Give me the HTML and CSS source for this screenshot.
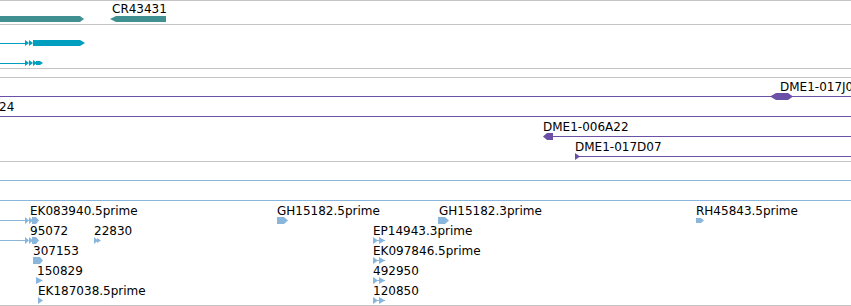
FILE: index.html
```html
<!DOCTYPE html>
<html lang="en">
<head>
    <meta charset="UTF-8">
    <title>Track view</title>
    <link rel="stylesheet" href="styles.css">
</head>
<body>
    <div class="view">
        <!-- gene models -->
        <div class="track t1">
            <svg width="851" height="23">
                <polygon class="teal" points="0,15 80,15 84,18 80,21 0,21"/>
                <polygon class="teal" points="110,18 116,15 166,15 166,21 116,21"/>
                <text x="112" y="12">CR43431</text>
            </svg>
        </div>

        <!-- transcripts -->
        <div class="track t2">
            <svg width="851" height="43">
                <rect class="cyan" x="0" y="18" width="25" height="1"/>
                <polygon class="cyan" points="25,15 29,18 25,21"/>
                <polygon class="cyan" points="29,15 33,18 29,21"/>
                <polygon class="cyan" points="33,15 80,15 85,18 80,21 33,21"/>

                <rect class="cyan" x="0" y="38" width="25" height="1"/>
                <polygon class="cyan" points="25,35 29,38 25,41"/>
                <polygon class="cyan" points="29,35 33,38 29,41"/>
                <polygon class="cyan" points="33,35 37,38 33,41"/>
                <polygon class="cyan" points="36,36 40,36 43,38 40,40 36,40"/>
            </svg>
        </div>

        <div class="track t3"></div>

        <!-- BAC clones -->
        <div class="track t4">
            <svg width="851" height="83">
                <rect class="purple" x="0" y="18" width="851" height="1"/>
                <polygon class="purple" points="770,18.5 776,15 788,15 793,18.5 788,22 776,22"/>
                <text x="780" y="13">DME1-017J06</text>

                <rect class="purple" x="0" y="38" width="851" height="1"/>
                <text x="-1" y="33">24</text>

                <rect class="purple" x="553" y="58" width="298" height="1"/>
                <polygon class="purple" points="543,58.5 547,55 553,55 553,62 547,62"/>
                <text x="543" y="53">DME1-006A22</text>

                <rect class="purple" x="575" y="78" width="276" height="1"/>
                <polygon class="purple" points="575,75 580,78.5 575,82"/>
                <text x="575" y="73">DME1-017D07</text>
            </svg>
        </div>

        <!-- ESTs -->
        <div class="track t5">
            <svg width="851" height="143">
                <rect class="blue" x="0" y="18" width="851" height="1"/>
                <rect class="blue" x="0" y="38" width="851" height="1"/>

                <rect class="blue" x="0" y="58" width="25" height="1"/>
                <polygon class="blue" points="25,55 29,58.5 25,62"/>
                <polygon class="blue" points="29,55 33,58.5 29,62"/>
                <polygon class="blue" points="32,55 36,55 39,58.5 36,62 32,62"/>
                <text x="30" y="53">EK083940.5prime</text>

                <polygon class="blue" points="277,55 284,55 288,58.5 284,62 277,62"/>
                <text x="277" y="53">GH15182.5prime</text>

                <polygon class="blue" points="438,55 445,55 449,58.5 445,62 438,62"/>
                <text x="439" y="53">GH15182.3prime</text>

                <polygon class="blue" points="696,56 701,56 704,58.5 701,61 696,61"/>
                <text x="696" y="53">RH45843.5prime</text>

                <rect class="blue" x="0" y="78" width="25" height="1"/>
                <polygon class="blue" points="25,75 29,78.5 25,82"/>
                <polygon class="blue" points="29,75 33,78.5 29,82"/>
                <polygon class="blue" points="32,75 36,75 39,78.5 36,82 32,82"/>
                <text x="30" y="73">95072</text>

                <polygon class="blue" points="94,75 98,78.5 94,82"/>
                <polygon class="blue" points="97,76 101,78.5 97,81"/>
                <text x="94" y="73">22830</text>

                <rect class="blue" x="373" y="78" width="12" height="1"/>
                <polygon class="blue" points="373,75 378,78.5 373,82"/>
                <polygon class="blue" points="379,75 385,78.5 379,82"/>
                <text x="373" y="73">EP14943.3prime</text>

                <polygon class="blue" points="33,95 40,95 43,98.5 40,102 33,102"/>
                <text x="33" y="93">307153</text>

                <rect class="blue" x="373" y="98" width="12" height="1"/>
                <polygon class="blue" points="373,95 378,98.5 373,102"/>
                <polygon class="blue" points="379,95 385,98.5 379,102"/>
                <text x="373" y="93">EK097846.5prime</text>

                <polygon class="blue" points="36,115 43,118.5 36,122"/>
                <text x="37" y="113">150829</text>

                <rect class="blue" x="373" y="118" width="12" height="1"/>
                <polygon class="blue" points="373,115 378,118.5 373,122"/>
                <polygon class="blue" points="379,115 385,118.5 379,122"/>
                <text x="373" y="113">492950</text>

                <polygon class="blue" points="38,135 43,138.5 38,142"/>
                <text x="38" y="133">EK187038.5prime</text>

                <rect class="blue" x="373" y="138" width="12" height="1"/>
                <polygon class="blue" points="373,135 378,138.5 373,142"/>
                <polygon class="blue" points="379,135 385,138.5 379,142"/>
                <text x="373" y="133">120850</text>
            </svg>
        </div>
    </div>
</body>
</html>
```

FILE: styles.css
```css
body {
    margin: 0;
    background: #fff;
    font-family: "DejaVu Sans", sans-serif;
    overflow: hidden;
}

.view {
    width: 851px;
    border-top: 1px solid #c4c4c4;
}

.track {
    border-bottom: 1px solid #c4c4c4;
    overflow: hidden;
}

.track svg {
    display: block;
}

.t1 { height: 23px; }
.t2 { height: 43px; }
.t3 { height: 8px; }
.t4 { height: 83px; }
.t5 { height: 143px; }

text {
    font-family: "DejaVu Sans", sans-serif;
    font-size: 12px;
    fill: #000;
}

.teal { fill: #408f91; }
.cyan { fill: #019fbf; }
.purple { fill: #6a50a6; }
.blue { fill: #88b6dc; }
```
